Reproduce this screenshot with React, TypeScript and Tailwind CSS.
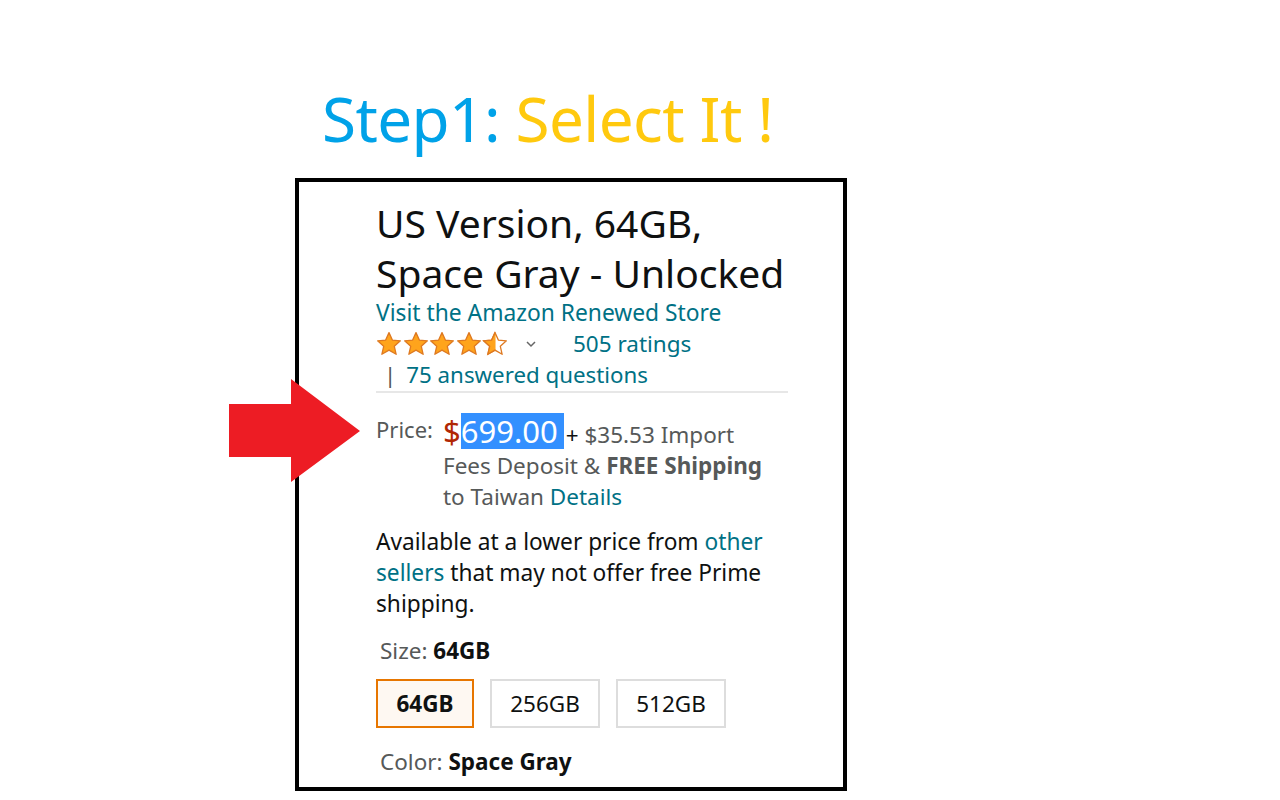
import React from "react";

function Star({ half = false }: { half?: boolean }) {
  const d =
    "M12 1.5l3.1 6.9 7.4.7-5.6 5 1.7 7.4L12 17.6l-6.6 3.9 1.7-7.4-5.6-5 7.4-.7z";
  return (
    <svg width="26" height="26" viewBox="0 0 24 24" className="shrink-0">
      <defs>
        <clipPath id="halfclip">
          <rect x="0" y="0" width="12.5" height="24" />
        </clipPath>
      </defs>
      {half ? (
        <>
          <path d={d} fill="#fff" stroke="#de7921" strokeWidth="1.2" strokeLinejoin="round" />
          <path d={d} fill="#ffa41c" stroke="#de7921" strokeWidth="1.2" clipPath="url(#halfclip)" />
        </>
      ) : (
        <path d={d} fill="#ffa41c" stroke="#de7921" strokeWidth="1.2" strokeLinejoin="round" />
      )}
    </svg>
  );
}

function RedArrow() {
  return (
    <svg width="132" height="104" viewBox="0 0 132 104" className="absolute left-[229px] top-[379px]">
      <polygon points="0,25 62,25 62,0 131,52 62,103 62,78 0,78" fill="#ed1c24" />
    </svg>
  );
}

export default function App() {
  return (
    <div
      className="relative w-[1280px] h-[800px] bg-white overflow-hidden"
      style={{ fontFamily: '"Noto Sans", "Open Sans", sans-serif' }}
    >
      <div className="flex flex-col pt-[78px] pl-[295px]">
        <h1 className="ml-[27px] text-[62px] leading-[80px] tracking-[-0.6px] whitespace-nowrap">
          <span className="text-[#00a2e8]">Step1:</span>{" "}
          <span className="text-[#ffc90e]">Select It !</span>
        </h1>

        <div className="mt-[20px] w-[552px] h-[613px] border-[4px] border-black bg-white pl-[77px] pr-[40px] pt-[16px] overflow-hidden">
          <div className="text-[39px] leading-[50px] text-[#0f1111] whitespace-nowrap">
            US Version, 64GB,
            <br />
            Space Gray - Unlocked
          </div>
          <div className="text-[22.8px] leading-[30px] text-[#007185] whitespace-nowrap">
            Visit the Amazon Renewed Store
          </div>
          <div className="flex items-center h-[31px]">
            <div className="flex gap-[0.5px]">
              <Star />
              <Star />
              <Star />
              <Star />
              <Star half />
            </div>
            <svg width="12" height="8" viewBox="0 0 12 8" className="ml-[17px]">
              <path d="M2 2l4 4 4-4" fill="none" stroke="#666" strokeWidth="1.5" />
            </svg>
            <span className="ml-[36px] text-[22.5px] text-[#007185]">505 ratings</span>
          </div>
          <div className="flex items-center h-[32px] text-[22.3px]">
            <span className="ml-[8px] text-[#555]">|</span>
            <span className="ml-[10px] text-[#007185]">75 answered questions</span>
          </div>
          <div className="w-[412px] h-[2px] bg-[#e7e7e7]" />

          <div className="flex mt-[20px] text-[22.5px] leading-[31px] text-[#565959]">
            <div className="w-[67px] shrink-0 text-[22px] leading-[32px]">Price:</div>
            <div className="w-[332px]">
              <span className="text-[31px] leading-[36px] inline-block text-[#b12704]">$</span>
              <span className="text-[31px] leading-[36px] inline-block text-white bg-[#3390ff] pr-[6px]">699.00</span>
              <span className="ml-[2px] text-[#0f1111]">+</span> $35.53 Import Fees Deposit &amp;{" "}
              <span className="font-bold">FREE Shipping</span> to Taiwan{" "}
              <span className="text-[#007185]">Details</span>
            </div>
          </div>

          <div className="mt-[14px] w-[400px] text-[22.7px] leading-[31px] text-[#0f1111]">
            Available at a lower price from <span className="text-[#007185]">other sellers</span> that may not offer free Prime shipping.
          </div>

          <div className="mt-[16px] ml-[4px] text-[22.5px] leading-[31px] text-[#565959]">
            Size: <span className="font-bold text-[#0f1111]">64GB</span>
          </div>
          <div className="flex gap-[16px] mt-[13px] text-[22.5px] text-[#0f1111]">
            <div className="w-[98px] h-[49px] flex items-center justify-center border-2 border-[#e77600] bg-[#fef8f2] font-bold">
              64GB
            </div>
            <div className="w-[110px] h-[49px] flex items-center justify-center border-2 border-[#dddddd]">
              256GB
            </div>
            <div className="w-[110px] h-[49px] flex items-center justify-center border-2 border-[#dddddd]">
              512GB
            </div>
          </div>
          <div className="mt-[18px] ml-[4px] text-[22.5px] leading-[31px] text-[#565959]">
            Color: <span className="font-bold text-[#0f1111]">Space Gray</span>
          </div>
        </div>
      </div>
      <RedArrow />
    </div>
  );
}
